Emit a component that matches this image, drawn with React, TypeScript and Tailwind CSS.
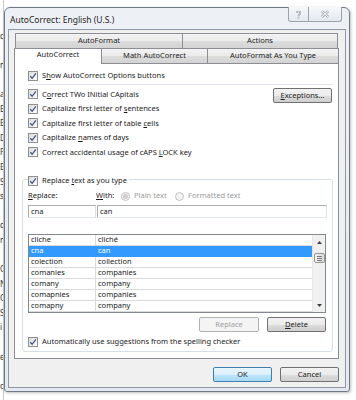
import React from "react";

const ui = "font-['Noto_Sans','Open_Sans',sans-serif]";

const rows: [string, string][] = [
  ["cliche", "cliché"],
  ["cna", "can"],
  ["colection", "collection"],
  ["comanies", "companies"],
  ["comany", "company"],
  ["comapnies", "companies"],
  ["comapny", "company"],
];

const bgLetters = ["", "c", "", "n", "", "a", "B", "B", "D", "F", "E", "S", "s", "", "c", "n", "", "C", "N", "C", "S", "i", "", "e", "", "o"];

function Box() {
  return (
    <span className="w-[10px] h-[10px] shrink-0 border border-[#8e8f8f] bg-[linear-gradient(135deg,#dcdcdc,#fbfbfb)] flex items-center justify-center">
      <svg viewBox="0 0 10 10" className="w-[8px] h-[8px]">
        <path d="M1.6 5.3 L3.9 7.8 L8.6 1.6" fill="none" stroke="#3a5189" strokeWidth="1.5" />
      </svg>
    </span>
  );
}

function Radio({ on = false }: { on?: boolean }) {
  return (
    <span className="w-[9px] h-[9px] shrink-0 rounded-full border border-[#c2c2c2] bg-[#f4f4f4] flex items-center justify-center">
      {on && <span className="w-[5px] h-[5px] rounded-full bg-[#cfcfcf]" />}
    </span>
  );
}

function CheckRow({ children, tall = false }: { children: React.ReactNode; tall?: boolean }) {
  return (
    <div className={`flex items-center gap-[4px] ${tall ? "h-[14.5px]" : "h-[14px]"}`}>
      <Box />
      <span>{children}</span>
    </div>
  );
}

function Btn({ children, disabled = false, def = false, className = "" }: { children: React.ReactNode; disabled?: boolean; def?: boolean; className?: string }) {
  const look = disabled
    ? "border-[#adb2b5] bg-[#f4f4f4] text-[#a0a0a0]"
    : def
      ? "border-[#3c7fb1] bg-[linear-gradient(#eaf6fd,#d9f0fc_50%,#bee6fd_50%,#a7d9f5)]"
      : "border-[#707070] bg-[linear-gradient(#f2f2f2,#ebebeb_50%,#dddddd_50%,#cfcfcf)]";
  return (
    <div className={`h-[15px] w-[59px] shrink-0 rounded-[2px] border flex items-center justify-center ${look} ${className}`}>
      {children}
    </div>
  );
}

function Tab({ children, className = "" }: { children: React.ReactNode; className?: string }) {
  return (
    <div className={`h-full border border-b-0 border-[#8c8e94] bg-[linear-gradient(#f3f3f3,#ebebeb_50%,#dddddd_50%,#d3d3d3)] flex items-center justify-center ${className}`}>
      {children}
    </div>
  );
}

export default function App() {
  return (
    <div className={`w-[356px] h-[400px] bg-white flex overflow-hidden text-[7.5px] leading-none text-[#1b1b1b] ${ui}`}>
      {/* document behind the dialog */}
      <div className="w-[4px] shrink-0 overflow-hidden border-r border-[#c8c8c8] pt-[14px]">
        <div className="w-[8px] flex flex-col text-[8px] text-[#333]">
          {bgLetters.map((l, i) => (
            <div key={i} className="h-[14.6px] leading-[14.6px]">{l}</div>
          ))}
        </div>
      </div>

      <div className="mt-[7px] w-[346px] h-[385px] shrink-0 rounded-t-[6px] rounded-b-[3px] border border-[#6f7a86] bg-[linear-gradient(#edf1f5,#e3e9ef)] shadow-[1px_1px_3px_rgba(0,0,0,0.25)] flex flex-col px-[3px]">
        {/* title bar */}
        <div className="h-[21px] flex justify-between">
          <div className="pl-[2px] pt-[8px] text-[8.5px] text-[#1e1e1e]">AutoCorrect: English (U.S.)</div>
          <div className="flex -mt-px mr-[4px]">
            <div className="w-[21px] h-[15px] border border-t-0 border-[#9aa3ae] rounded-bl-[3px] bg-[linear-gradient(#f6f8fa,#e4e9ef)] flex items-center justify-center">
              <svg viewBox="0 0 10 12" className="w-[7px] h-[9px]">
                <path d="M2.5 4 C2.5 1 7.5 1 7.5 4 C7.5 6 5 6 5 8" fill="none" stroke="#8a9099" strokeWidth="2.4" />
                <path d="M2.5 4 C2.5 1 7.5 1 7.5 4 C7.5 6 5 6 5 8" fill="none" stroke="#ffffff" strokeWidth="1" />
                <circle cx="5" cy="10.5" r="1.2" fill="#ffffff" stroke="#8a9099" strokeWidth="0.7" />
              </svg>
            </div>
            <div className="w-[33px] h-[15px] border border-t-0 border-l-0 border-[#9aa3ae] rounded-br-[3px] bg-[linear-gradient(#f6f8fa,#e4e9ef)] flex items-center justify-center">
              <svg viewBox="0 0 12 10" className="w-[10px] h-[8px]">
                <path d="M2 1.5 L10 8.5 M10 1.5 L2 8.5" fill="none" stroke="#8a9099" strokeWidth="3" />
                <path d="M2 1.5 L10 8.5 M10 1.5 L2 8.5" fill="none" stroke="#ffffff" strokeWidth="1.4" />
              </svg>
            </div>
          </div>
        </div>

        {/* client area */}
        <div className="flex-1 mb-[3px] border border-[#8d98a4] bg-[#f0f0f0] flex flex-col">
          <div className="mt-[3px] ml-[6px] w-[323px] h-[15px] flex">
            <Tab className="w-[168px]">AutoFormat</Tab>
            <Tab className="w-[156px] -ml-px">Actions</Tab>
          </div>
          <div className="ml-[5px] w-[325px] h-[15px] flex relative z-10">
            <div className="w-[88px] h-[16px] border border-b-0 border-[#8c8e94] bg-white flex items-center justify-center pb-[3px]">AutoCorrect</div>
            <Tab className="w-[107px] -ml-px">Math AutoCorrect</Tab>
            <Tab className="w-[132px] -ml-px">AutoFormat As You Type</Tab>
          </div>

          <div className="ml-[5px] w-[325px] h-[296px] border border-[#8c8e94] bg-white pl-[7px] pr-[5px] pt-[5px] flex flex-col">
            <div className="pl-[6px]">
              <CheckRow>
                S<u>h</u>ow AutoCorrect Options buttons
              </CheckRow>
            </div>
            <div className="ml-[6px] mt-[1px] h-px bg-[#dfe4ea]" />
            <div className="pl-[6px] mt-[2px] flex justify-between">
              <div className="flex flex-col">
                <CheckRow tall>C<u>o</u>rrect TWo INitial CApitals</CheckRow>
                <CheckRow tall>Capitalize first letter of <u>s</u>entences</CheckRow>
                <CheckRow tall>Capitalize first letter of table <u>c</u>ells</CheckRow>
                <CheckRow tall>Capitalize <u>n</u>ames of days</CheckRow>
                <CheckRow tall>Correct accidental usage of cAPS <u>L</u>OCK key</CheckRow>
              </div>
              <Btn className="mt-[1px] mr-px">
                <u>E</u>xceptions...
              </Btn>
            </div>

            <fieldset className="mt-[13px] border border-[#d5dfe5] rounded-[3px] pl-[5px] pr-[6px] pb-[2px]">
              <legend className="h-[14px] pt-[3px] pr-[2px] flex items-center gap-[4px] bg-white">
                <Box />
                <span>
                  Replace <u>t</u>ext as you type
                </span>
              </legend>
              <div className="mt-[3px] h-[13px] flex items-center">
                <div className="w-[68px]">
                  <u>R</u>eplace:
                </div>
                <div className="w-[25px]">
                  <u>W</u>ith:
                </div>
                <div className="flex items-center gap-[4px] text-[#9a9a9a]">
                  <Radio on />
                  <span className="w-[37px]">Plain text</span>
                  <Radio />
                  <span>Formatted text</span>
                </div>
              </div>
              <div className="mt-[2.5px] h-[13px] flex">
                <div className="w-[68px] border border-[#abadb3] border-r-[#dbdfe6] border-b-[#e3e9ef] pl-[2px] flex items-center">cna</div>
                <div className="ml-px flex-1 mr-[-1px] border border-[#abadb3] border-r-[#dbdfe6] border-b-[#e3e9ef] pl-[2px] flex items-center">can</div>
              </div>

              <div className="mt-[16px] h-[79px] border border-[#828790] flex">
                <div className="flex-1 flex flex-col">
                  {rows.map(([a, b], i) => {
                    const sel = i === 1;
                    return (
                      <div
                        key={a}
                        className={`h-[11px] flex border-b ${sel ? "bg-[#3399ff] text-white border-[#3399ff]" : "border-[#dadada]"}`}
                      >
                        <div className={`w-[67px] pl-[2px] flex items-center border-r ${sel ? "border-[#3399ff]" : "border-[#dadada]"}`}>{a}</div>
                        <div className="flex-1 pl-[2px] flex items-center">{b}</div>
                      </div>
                    );
                  })}
                </div>
                <div className="w-[13px] bg-[#f0f0f0] border-l border-[#e6e6e6] flex flex-col items-center">
                  <svg viewBox="0 0 7 4" className="w-[5px] h-[3px] mt-[6px]">
                    <path d="M0 4 L3.5 0 L7 4 Z" fill="#404040" />
                  </svg>
                  <div className="mt-[9px] w-[11px] h-[10px] rounded-[2px] border border-[#959595] bg-[linear-gradient(90deg,#f3f3f3,#dcdcdc)] flex flex-col items-center justify-center gap-[1px]">
                    <span className="w-[5px] h-px bg-[#777]" />
                    <span className="w-[5px] h-px bg-[#777]" />
                    <span className="w-[5px] h-px bg-[#777]" />
                  </div>
                  <div className="flex-1" />
                  <svg viewBox="0 0 7 4" className="w-[5px] h-[3px] mb-[5px]">
                    <path d="M0 0 L3.5 4 L7 0 Z" fill="#404040" />
                  </svg>
                </div>
              </div>

              <div className="mt-[4px] flex justify-end gap-[8px]">
                <Btn disabled className="w-[60px]">Replace</Btn>
                <Btn>
                  <u>D</u>elete
                </Btn>
              </div>
              <div className="mt-[3px]">
                <CheckRow>Automatically use suggestions from the spelling checker</CheckRow>
              </div>
            </fieldset>
          </div>

          <div className="mt-[8px] pr-[6px] flex justify-end gap-[8px]">
            <Btn def>OK</Btn>
            <Btn>Cancel</Btn>
          </div>
        </div>
      </div>
    </div>
  );
}
